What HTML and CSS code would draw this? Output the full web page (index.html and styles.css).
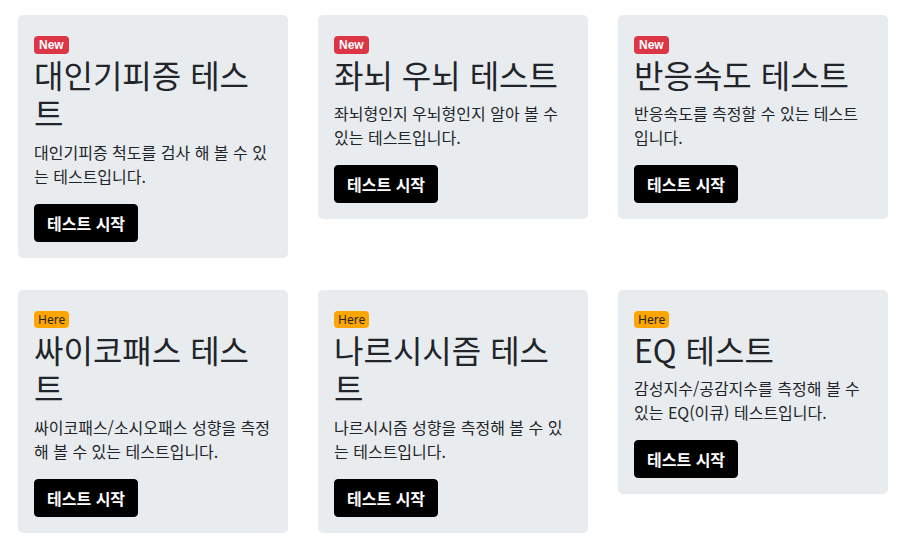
FILE: index.html
```html
<!DOCTYPE html>
<html lang="ko">
<head>
<meta charset="utf-8">
<title>테스트 목록</title>
<link rel="stylesheet" href="styles.css">
</head>
<body>
<main class="grid">
  <div class="card">
    <span class="badge badge-new">New</span>
    <h2 class="title">대인기피증 테스트</h2>
    <p class="desc">대인기피증 척도를 검사 해 볼 수 있는 테스트입니다.</p>
    <a class="btn" href="#">테스트 시작</a>
  </div>
  <div class="card">
    <span class="badge badge-new">New</span>
    <h2 class="title">좌뇌 우뇌 테스트</h2>
    <p class="desc">좌뇌형인지 우뇌형인지 알아 볼 수 있는 테스트입니다.</p>
    <a class="btn" href="#">테스트 시작</a>
  </div>
  <div class="card">
    <span class="badge badge-new">New</span>
    <h2 class="title">반응속도 테스트</h2>
    <p class="desc">반응속도를 측정할 수 있는 테스트입니다.</p>
    <a class="btn" href="#">테스트 시작</a>
  </div>
  <div class="card">
    <span class="badge badge-here">Here</span>
    <h2 class="title">싸이코패스 테스트</h2>
    <p class="desc">싸이코패스/소시오패스 성향을 측정해 볼 수 있는 테스트입니다.</p>
    <a class="btn" href="#">테스트 시작</a>
  </div>
  <div class="card">
    <span class="badge badge-here">Here</span>
    <h2 class="title">나르시시즘 테스트</h2>
    <p class="desc">나르시시즘 성향을 측정해 볼 수 있는 테스트입니다.</p>
    <a class="btn" href="#">테스트 시작</a>
  </div>
  <div class="card">
    <span class="badge badge-here">Here</span>
    <h2 class="title">EQ 테스트</h2>
    <p class="desc">감성지수/공감지수를 측정해 볼 수 있는 EQ(이큐) 테스트입니다.</p>
    <a class="btn" href="#">테스트 시작</a>
  </div>
</main>
</body>
</html>
```
FILE: styles.css
```css
html, body {
  margin: 0;
  padding: 0;
  background: #ffffff;
}

body {
  font-family: "Noto Sans CJK KR", "Noto Sans", sans-serif;
  font-size: 16px;
  line-height: 1.5;
  color: #212529;
}

.grid {
  display: grid;
  grid-template-columns: repeat(3, 270px);
  column-gap: 30px;
  row-gap: 32px;
  align-items: start;
  padding: 15px 0 0 18px;
}

.card {
  display: flex;
  flex-direction: column;
  align-items: flex-start;
  background: #e9ecef;
  border-radius: 5px;
  padding: 16px;
}

.badge {
  display: inline-block;
  height: 18px;
  line-height: 18px;
  margin: 5px 0 1px;
  border-radius: 4px;
  white-space: nowrap;
}

.badge-new {
  background: #dc3545;
  color: #ffffff;
  font-family: "Liberation Sans", Arial, sans-serif;
  font-weight: 700;
  font-size: 12px;
  padding: 0 5px;
}

.badge-here {
  background: #ffa500;
  color: #212529;
  font-family: "Noto Sans", sans-serif;
  font-weight: 400;
  font-size: 12px;
  height: 17px;
  line-height: 17px;
  margin-bottom: 2px;
  padding: 0 4px;
}

.title {
  margin: 0 0 8px;
  font-size: 32px;
  font-weight: 400;
  line-height: 1.2;
  color: #212529;
}

.desc {
  margin: 0 0 16px;
  font-size: 16px;
  line-height: 24px;
  color: #212529;
}

.btn {
  display: inline-block;
  padding: 6px 12px;
  border: 1px solid #000000;
  line-height: 24px;
  background: #000000;
  color: #ffffff;
  font-size: 16px;
  font-weight: 700;
  text-decoration: none;
  border-radius: 4px;
}
```
